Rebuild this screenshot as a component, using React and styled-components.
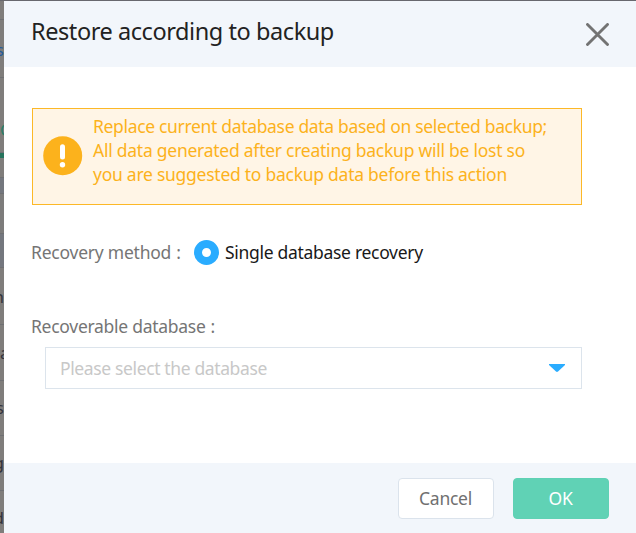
import React from "react";
import styled, { createGlobalStyle } from "styled-components";

const GlobalStyle = createGlobalStyle`
  * { box-sizing: border-box; }
  html, body { margin: 0; padding: 0; overflow: hidden; }
  body { font-family: "Noto Sans", "Open Sans", sans-serif; font-size: 17.5px; }
  button { font: inherit; }
`;

const Page = styled.div`
  width: 636px;
  height: 533px;
  display: grid;
  grid-template-columns: 4px 1fr;
  grid-template-rows: 1px 1fr;
  background: #6b6b71;
  overflow: hidden;
`;

const TopEdge = styled.div`
  grid-column: 1 / 3;
  background: #68686e;
`;

const Backdrop = styled.div`
  display: flex;
  flex-direction: column;
  overflow: hidden;
  min-height: 0;
`;

const Strip = styled.div`
  flex: none;
  display: flex;
  align-items: flex-end;
  justify-content: ${(p) => (p.$start ? "flex-start" : "flex-end")};
  height: ${(p) => p.$h}px;
  padding-bottom: ${(p) => p.$pb || 0}px;
  background: ${(p) => p.$bg || "#7f7d7b"};
  border-bottom: 1px solid ${(p) => p.$line || "#6f7073"};
  color: ${(p) => p.$color || "#34343c"};
  font-size: 17px;
  line-height: 20px;
  overflow: hidden;
`;

const Dialog = styled.section`
  display: flex;
  flex-direction: column;
  background: #fff;
`;

const Header = styled.header`
  height: 66px;
  flex: none;
  display: flex;
  justify-content: space-between;
  padding: 0 27px 0 27px;
  background: #f2f6fb;
`;

const Title = styled.h1`
  margin: 13px 0 0;
  font-size: 23.5px;
  font-weight: 400;
  line-height: 34px;
  letter-spacing: -0.43px;
  color: #222;
  white-space: nowrap;
`;

const CloseButton = styled.button`
  width: 23px;
  height: 23px;
  margin-top: 22px;
  padding: 0;
  border: 0;
  background: none;
  svg { display: block; }
`;

const Body = styled.div`
  flex: 1;
  padding: 41px 54px 0 28px;
`;

const Notice = styled.div`
  display: flex;
  height: 97px;
  padding: 5px 0 0 10px;
  border: 1px solid #fcb827;
  background: #fff5e6;
  color: #fcb21c;
  svg { flex: none; margin: 22px 10px 0 0; }
`;

const NoticeText = styled.div`
  line-height: 24px;
`;

const Line = styled.div`
  white-space: nowrap;
  letter-spacing: ${(p) => p.$ls}px;
`;

const MethodRow = styled.div`
  display: flex;
  align-items: center;
  height: 26px;
  margin: 34px 0 0 -1px;
`;

const Label = styled.span`
  color: #757575;
  white-space: nowrap;
  line-height: 26px;
  letter-spacing: ${(p) => p.$ls}px;
`;

const Colon = styled.span`
  margin-left: 5px;
`;

const MethodLabel = styled.div`
  width: 163px;
  flex: none;
`;

const Radio = styled.span`
  flex: none;
  width: 25px;
  height: 25px;
  margin-right: 6px;
  border: 8px solid #2aacff;
  border-radius: 50%;
  background: #fff;
`;

const Option = styled.span`
  color: #191919;
  white-space: nowrap;
  line-height: 26px;
  letter-spacing: -0.3px;
`;

const DatabaseField = styled.div`
  margin: 48px 0 0 -1px;
`;

const Select = styled.div`
  display: flex;
  align-items: center;
  justify-content: space-between;
  height: 42px;
  margin: 8px 0 0 14px;
  padding: 0 16px 1px 14px;
  border: 1px solid #dce4ec;
  color: #c8c8c8;
  letter-spacing: -0.37px;
`;

const Footer = styled.footer`
  flex: none;
  display: flex;
  justify-content: flex-end;
  gap: 19px;
  height: 70px;
  padding: 15px 27px 0 0;
  background: #f2f6fb;
`;

const Button = styled.button`
  width: 96px;
  height: 41px;
  padding: 0 1px 1px 0;
  border: 1px solid ${(p) => (p.$primary ? "#5fd1b4" : "#dbe3ec")};
  border-radius: 4px;
  background: ${(p) => (p.$primary ? "#60d2b5" : "#fff")};
  color: ${(p) => (p.$primary ? "#fff" : "#707070")};
  letter-spacing: -0.25px;
`;

const strips = [
  { h: 19 },
  { h: 58, text: "s", color: "#245c9c", pb: 17 },
  { h: 75, text: "C", color: "#2d7d67", pb: 12, start: true },
  { h: 5, bg: "#26735c", line: "#26735c" },
  { h: 20 },
  { h: 16, bg: "#74777e" },
  { h: 40, bg: "#7d7c7b" },
  { h: 34, bg: "#74777e" },
  { h: 57, text: "n", pb: 17 },
  { h: 56, text: "a", pb: 17, start: true },
  { h: 55, text: "s", pb: 17 },
  { h: 55, text: "g", pb: 17 },
  { h: 55, text: "d", pb: 17 },
];

export default function App() {
  return (
    <>
      <GlobalStyle />
      <Page>
        <TopEdge />
        <Backdrop aria-hidden="true">
          {strips.map((s, i) => (
            <Strip key={i} $h={s.h} $bg={s.bg} $line={s.line} $color={s.color} $pb={s.pb} $start={s.start}>
              {s.text}
            </Strip>
          ))}
        </Backdrop>
        <Dialog role="dialog">
          <Header>
            <Title>Restore according to backup</Title>
            <CloseButton aria-label="Close">
              <svg width="23" height="23" viewBox="0 0 23 23">
                <path d="M1.5 1.5 21.5 21.5M21.5 1.5 1.5 21.5" stroke="#737373" strokeWidth="2.9" strokeLinecap="round" />
              </svg>
            </CloseButton>
          </Header>
          <Body>
            <Notice>
              <svg width="40" height="40" viewBox="0 0 40 40">
                <circle cx="19.7" cy="19.7" r="19.5" fill="#fcb21c" />
                <path d="M19.5 10.8v10.2" stroke="#fff" strokeWidth="5" strokeLinecap="round" />
                <circle cx="19.5" cy="28.7" r="2.7" fill="#fff" />
              </svg>
              <NoticeText>
                <Line $ls={-0.33}>Replace current database data based on selected backup;</Line>
                <Line $ls={-0.25}>All data generated after creating backup will be lost so</Line>
                <Line $ls={-0.26}>you are suggested to backup data before this action</Line>
              </NoticeText>
            </Notice>
            <MethodRow>
              <MethodLabel>
                <Label $ls={-0.23}>Recovery method<Colon>:</Colon></Label>
              </MethodLabel>
              <Radio role="radio" aria-checked="true" />
              <Option>Single database recovery</Option>
            </MethodRow>
            <DatabaseField>
              <Label $ls={-0.28}>Recoverable database<Colon>:</Colon></Label>
              <Select>
                <span>Please select the database</span>
                <svg width="16" height="8" viewBox="0 0 16 8">
                  <path d="M0 0h16v1L9 7.5q-1 .8-2 0L0 1z" fill="#2aacff" />
                </svg>
              </Select>
            </DatabaseField>
          </Body>
          <Footer>
            <Button>Cancel</Button>
            <Button $primary>OK</Button>
          </Footer>
        </Dialog>
      </Page>
    </>
  );
}
